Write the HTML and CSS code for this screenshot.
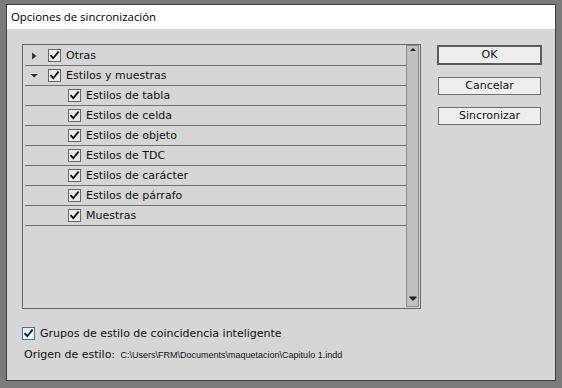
FILE: index.html
```html
<!DOCTYPE html>
<html lang="es">
<head>
    <meta charset="UTF-8">
    <title>Opciones de sincronización</title>
    <link rel="stylesheet" href="styles.css">
</head>
<body>
    <div class="dialog">
        <div class="titlebar">Opciones de sincronización</div>
        <div class="body">
            <div class="top">
                <div class="list">
                    <div class="rows">
                        <div class="row">
                            <svg class="twisty" width="18" height="10" viewBox="0 0 18 10"><path d="M2 1.5 L6.5 5 L2 8.5 Z" fill="#333"/></svg>
                            <span class="box"><svg width="11" height="11" viewBox="0 0 11 11"><path d="M1.5 5.2 L4.2 8.2 L9.6 1.6" fill="none" stroke="#111" stroke-width="1.8"/></svg></span>
                            <span class="label">Otras</span>
                        </div>
                        <div class="row">
                            <svg class="twisty" width="18" height="10" viewBox="0 0 18 10"><path d="M0.5 3 L8 3 L4.2 6.5 Z" fill="#333"/></svg>
                            <span class="box"><svg width="11" height="11" viewBox="0 0 11 11"><path d="M1.5 5.2 L4.2 8.2 L9.6 1.6" fill="none" stroke="#111" stroke-width="1.8"/></svg></span>
                            <span class="label">Estilos y muestras</span>
                        </div>
                        <div class="row child">
                            <span class="box"><svg width="11" height="11" viewBox="0 0 11 11"><path d="M1.5 5.2 L4.2 8.2 L9.6 1.6" fill="none" stroke="#111" stroke-width="1.8"/></svg></span>
                            <span class="label">Estilos de tabla</span>
                        </div>
                        <div class="row child">
                            <span class="box"><svg width="11" height="11" viewBox="0 0 11 11"><path d="M1.5 5.2 L4.2 8.2 L9.6 1.6" fill="none" stroke="#111" stroke-width="1.8"/></svg></span>
                            <span class="label">Estilos de celda</span>
                        </div>
                        <div class="row child">
                            <span class="box"><svg width="11" height="11" viewBox="0 0 11 11"><path d="M1.5 5.2 L4.2 8.2 L9.6 1.6" fill="none" stroke="#111" stroke-width="1.8"/></svg></span>
                            <span class="label">Estilos de objeto</span>
                        </div>
                        <div class="row child">
                            <span class="box"><svg width="11" height="11" viewBox="0 0 11 11"><path d="M1.5 5.2 L4.2 8.2 L9.6 1.6" fill="none" stroke="#111" stroke-width="1.8"/></svg></span>
                            <span class="label">Estilos de TDC</span>
                        </div>
                        <div class="row child">
                            <span class="box"><svg width="11" height="11" viewBox="0 0 11 11"><path d="M1.5 5.2 L4.2 8.2 L9.6 1.6" fill="none" stroke="#111" stroke-width="1.8"/></svg></span>
                            <span class="label">Estilos de carácter</span>
                        </div>
                        <div class="row child">
                            <span class="box"><svg width="11" height="11" viewBox="0 0 11 11"><path d="M1.5 5.2 L4.2 8.2 L9.6 1.6" fill="none" stroke="#111" stroke-width="1.8"/></svg></span>
                            <span class="label">Estilos de párrafo</span>
                        </div>
                        <div class="row child">
                            <span class="box"><svg width="11" height="11" viewBox="0 0 11 11"><path d="M1.5 5.2 L4.2 8.2 L9.6 1.6" fill="none" stroke="#111" stroke-width="1.8"/></svg></span>
                            <span class="label">Muestras</span>
                        </div>
                    </div>
                    <div class="scrollbar">
                        <svg width="12" height="8" viewBox="0 0 12 8"><path d="M3 5 L9 5 L6 2 Z" fill="#222"/></svg>
                        <svg width="12" height="8" viewBox="0 0 12 8"><path d="M2.5 1.5 L9.5 1.5 L9.5 2.5 L6 6 L2.5 2.5 Z" fill="#222"/></svg>
                    </div>
                </div>
                <div class="buttons">
                    <div class="btn default">OK</div>
                    <div class="btn">Cancelar</div>
                    <div class="btn">Sincronizar</div>
                </div>
            </div>
            <div class="footer">
                <div class="check-line">
                    <span class="box focus"><svg width="11" height="11" viewBox="0 0 11 11"><path d="M1.5 5.2 L4.2 8.2 L9.6 1.6" fill="none" stroke="#111" stroke-width="1.8"/></svg></span>
                    <span class="label">Grupos de estilo de coincidencia inteligente</span>
                </div>
                <div class="origin">Origen de estilo: <span class="path">C:\Users\FRM\Documents\maquetacion\Capitulo 1.indd</span></div>
            </div>
        </div>
    </div>
</body>
</html>
```

FILE: styles.css
```css
html, body {
    margin: 0;
    height: 100%;
}
body {
    background: #7b7b7b;
    padding: 4px 6px;
    box-sizing: border-box;
    font-family: "DejaVu Sans", sans-serif;
    font-size: 11px;
    color: #111;
}
.dialog {
    width: 550px;
    height: 377px;
    border: 1px solid #3f3f3f;
    box-sizing: border-box;
    background: #d6d6d6;
    display: flex;
    flex-direction: column;
}
.titlebar {
    height: 24px;
    background: #fff;
    font-family: "Open Sans", sans-serif;
    font-size: 11.4px;
    line-height: 23px;
    padding-left: 4px;
    color: #000;
}
.body {
    padding: 15px 0 0 15px;
}
.top {
    display: flex;
}
.list {
    width: 399px;
    height: 265px;
    border: 1px solid #666;
    box-sizing: border-box;
    display: flex;
}
.rows {
    flex: 1;
    padding: 1px 0 0 2px;
}
.row {
    height: 19px;
    border-bottom: 1px solid #707070;
    display: flex;
    align-items: center;
    padding-left: 5px;
}
.row.child {
    padding-left: 43px;
}
.twisty {
    flex: none;
}
.box {
    width: 13px;
    height: 13px;
    border: 1px solid #666;
    box-sizing: border-box;
    background: #ebebeb;
    display: flex;
    align-items: center;
    justify-content: center;
    flex: none;
}
.box.focus {
    border-color: #2f78b4;
    background: #f4f4f4;
}
.label {
    margin-left: 5px;
}
.scrollbar {
    width: 13px;
    margin: 0 1px 1px 0;
    background: #c0c0c0;
    border: 1px solid #8b8b8b;
    box-sizing: border-box;
    display: flex;
    flex-direction: column;
    justify-content: space-between;
    align-items: center;
    padding: 0 0 3px;
}
.buttons {
    margin-left: 16px;
    width: 105px;
    display: flex;
    flex-direction: column;
    gap: 12px;
    padding-top: 1px;
}
.btn {
    height: 18px;
    border: 1px solid #6f6f6f;
    background: #eeeeee;
    text-align: center;
    line-height: 16px;
    margin: 0 1px;
    box-sizing: border-box;
}
.btn.default {
    height: 20px;
    border: 2px solid #5c5c5c;
    margin: 0;
}
.footer {
    padding-top: 18px;
}
.check-line {
    display: flex;
    align-items: center;
}
.check-line .label {
    margin-left: 5px;
}
.origin {
    margin: 8px 0 0 2px;
}
.path {
    font-family: "Liberation Sans", sans-serif;
    font-size: 9px;
    margin-left: 2px;
}
```
